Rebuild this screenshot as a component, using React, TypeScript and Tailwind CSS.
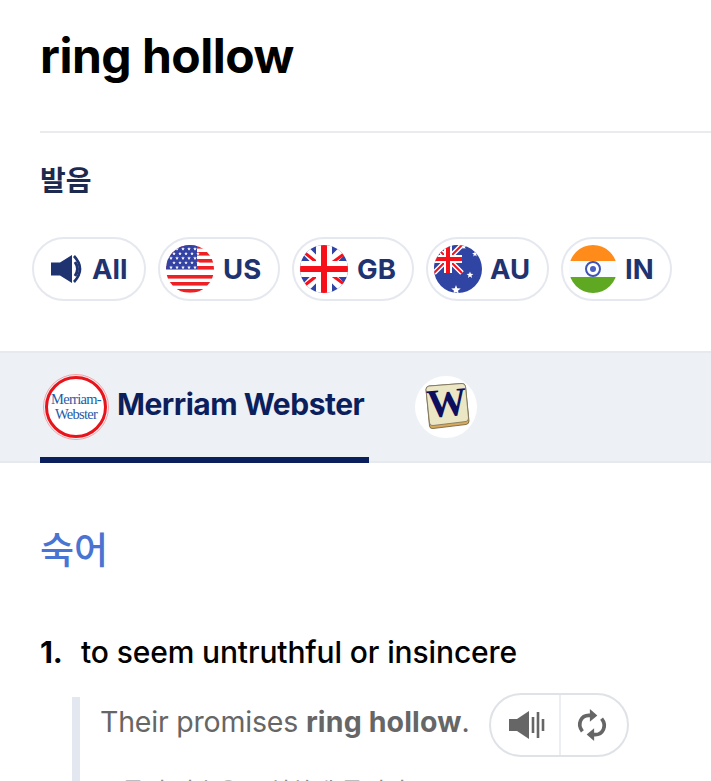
import React from 'react';

const Star: React.FC<{ x: number; y: number; r: number }> = ({ x, y, r }) => {
  const pts: string[] = [];
  for (let i = 0; i < 10; i++) {
    const a = -Math.PI / 2 + (i * Math.PI) / 5;
    const rad = i % 2 === 0 ? r : r * 0.42;
    pts.push(`${x + rad * Math.cos(a)},${y + rad * Math.sin(a)}`);
  }
  return <polygon points={pts.join(' ')} fill="#fff" />;
};

const Round: React.FC<{ id: string; children: React.ReactNode }> = ({ id, children }) => (
  <svg width="48" height="48" viewBox="0 0 48 48" className="shrink-0">
    <defs>
      <clipPath id={id}>
        <circle cx="24" cy="24" r="24" />
      </clipPath>
    </defs>
    <g clipPath={`url(#${id})`}>{children}</g>
  </svg>
);

const UsFlag = () => {
  const stars: [number, number][] = [];
  for (let row = 0; row < 5; row++) {
    for (let col = 0; col < 5; col++) {
      stars.push([5 + col * 6 + (row % 2 ? 3 : 0), 4 + row * 4.6]);
    }
  }
  return (
    <Round id="us">
      <rect width="48" height="48" fill="#fff" />
      {[0, 7, 14, 21, 30, 37, 44].map((y) => (
        <rect key={y} x="0" y={y} width="48" height="3.6" fill="#ee2024" />
      ))}
      <rect width="31" height="24" fill="#3342a3" />
      {stars.map(([x, y], i) => (
        <Star key={i} x={x} y={y} r={1.9} />
      ))}
    </Round>
  );
};

const GbFlag = () => (
  <Round id="gb">
    <rect width="48" height="48" fill="#3044a4" />
    <path d="M0 0L48 48M48 0L0 48" stroke="#fff" strokeWidth="9" />
    <path d="M0 4L20 20M48 6L29 20M0 44L19 29M48 42L29 28" stroke="#f5101a" strokeWidth="3" />
    <rect x="16" width="16" height="48" fill="#fff" />
    <rect y="16" width="48" height="16" fill="#fff" />
    <rect x="21" width="6" height="48" fill="#f5101a" />
    <rect y="21" width="48" height="6" fill="#f5101a" />
  </Round>
);

const AuFlag = () => (
  <Round id="au">
    <rect width="48" height="48" fill="#3044a4" />
    <g>
      <rect width="28" height="28" fill="#3044a4" />
      <path d="M0 0L28 28M28 0L0 28" stroke="#fff" strokeWidth="5" />
      <path d="M0 0L28 28M28 0L0 28" stroke="#f5101a" strokeWidth="2" />
      <rect x="10" width="8" height="28" fill="#fff" />
      <rect y="10" width="28" height="8" fill="#fff" />
      <rect x="12" width="4" height="28" fill="#f5101a" />
      <rect y="12" width="28" height="4" fill="#f5101a" />
    </g>
    <Star x={36} y={30} r={3.6} />
    <Star x={22} y={45} r={5} />
    <Star x={41} y={9} r={3} />
    <Star x={30} y={2} r={2.5} />
  </Round>
);

const InFlag = () => (
  <Round id="in">
    <rect width="48" height="16" fill="#ff8c1a" />
    <rect y="16" width="48" height="16" fill="#f8fcff" />
    <rect y="32" width="48" height="16" fill="#5fa822" />
    <circle cx="24" cy="24" r="7" fill="#fff" stroke="#3f53b5" strokeWidth="2" />
    <circle cx="24" cy="24" r="3" fill="#4a5fc0" />
  </Round>
);

const Pill: React.FC<{ label: string; flag: React.ReactNode; className: string }> = ({ label, flag, className }) => (
  <div className={`flex h-16 items-center rounded-full border-2 border-[#e5e8ee] bg-white ${className}`}>
    {flag}
    <span className="pt-0.5 text-[27.5px] font-bold text-[#1e3370]">{label}</span>
  </div>
);

const MwLogo = () => (
  <div className="relative flex size-[62px] shrink-0 flex-col items-center justify-center rounded-full border-[3px] border-[#e8141c] bg-white font-['Liberation_Serif',serif] text-[14.5px] leading-[15px] tracking-[-0.7px] text-[#1d5ca8] outline outline-1 outline-offset-1 outline-[#f2a5a8]">
    <span>Merriam-</span>
    <span>Webster</span>
  </div>
);

const WikiLogo = () => (
  <div className="flex size-[62px] items-center justify-center rounded-full bg-white">
    <svg width="48" height="48" viewBox="0 0 48 48">
      <path d="M4 6.5Q4 3.5 7 3L40 0.5Q43 0.5 43.5 3.5L47 38Q47 41 44 41.5L11 45.5Q8 46 7.5 43Z" fill="#d8a95c" stroke="#6b5a35" strokeWidth="0.8" />
      <path d="M4 6.5Q4 3.5 7 3L40 0.5Q43 0.5 43.5 3.5L46.5 35Q46.5 38 44 38.5L11 42.5Q8 43 7.5 40Z" fill="#ebe6c4" stroke="#77705a" strokeWidth="0.8" />
      <text x="25" y="33" textAnchor="middle" transform="rotate(-5 25 22)" fontFamily="Liberation Serif, serif" fontWeight="700" fontSize="40" fill="#0d0f5e">
        W
      </text>
    </svg>
  </div>
);

const App: React.FC = () => {
  return (
    <div className="h-[781px] w-[711px] overflow-hidden bg-white font-['Inter','Noto_Sans_CJK_KR',sans-serif]">
      <div className="pl-10">
        <h1 className="pt-[26px] pb-[46px] text-[48px] leading-[59px] font-bold tracking-[-0.5px] text-black">ring hollow</h1>
        <div className="h-0.5 bg-[#e9ebee]" />
        <h2 className="mt-[30px] text-[28px] leading-9 font-bold text-[#1b2a4e]">발음</h2>
      </div>

      <div className="mt-[38px] flex gap-3 pl-8">
        <div className="flex h-16 w-[114px] items-center rounded-full border-2 border-[#e5e8ee] bg-white pl-[16px]">
          <svg width="36" height="30" viewBox="0 0 36 30" className="shrink-0">
            <path d="M1 8.5H10L22 1V29L10 21.5H1Z" fill="#1e3370" />
            <path d="M25 8Q30 15 25 22" fill="none" stroke="#1e3370" strokeWidth="3" />
            <path d="M24 2Q36 15 24 28" fill="none" stroke="#1e3370" strokeWidth="2.6" />
          </svg>
          <span className="ml-[6px] pt-0.5 text-[27.5px] font-bold text-[#1e3370]">All</span>
        </div>
        <Pill label="US" flag={<UsFlag />} className="w-[122px] gap-[9px] pl-1.5" />
        <Pill label="GB" flag={<GbFlag />} className="w-[122px] gap-[9px] pl-1.5" />
        <Pill label="AU" flag={<AuFlag />} className="w-[123px] gap-2 pl-1.5" />
        <Pill label="IN" flag={<InFlag />} className="w-[111px] gap-2 pl-1.5" />
      </div>

      <div className="mt-[50px] flex h-[112px] border-y-2 border-[#e6e9ed] bg-[#edf0f4] pl-10">
        <div className="flex h-[110px] w-[329px] items-center gap-[10px] border-b-[6px] border-[#0b1f5c] pt-1 pl-[5px]">
          <MwLogo />
          <span className="mb-[6px] text-[30px] font-bold tracking-[-0.5px] whitespace-nowrap text-[#0b1f5c]">Merriam Webster</span>
        </div>
        <div className="ml-[46px] flex h-[108px] items-center">
          <WikiLogo />
        </div>
      </div>

      <div className="pl-10">
        <h3 className="mt-[63px] text-[37px] leading-[50px] font-medium text-[#4a74d2]">숙어</h3>
        <div className="mt-[56px] flex text-[30px] leading-10 tracking-[-0.13px] font-medium text-black">
          <span className="w-[41px] font-bold">1.</span>
          <span>to seem untruthful or insincere</span>
        </div>
        <div className="mt-[25px] ml-8 flex h-[120px] flex-col border-l-8 border-[#e3e7f0] pl-[20px]">
          <div className="flex items-start">
            <p className="pt-[5px] text-[28.5px] leading-10 tracking-[-0.2px] text-[#666]">
              Their promises <b className="font-bold tracking-[0.15px]">ring hollow</b>.
            </p>
            <div className="mt-[-4px] ml-[19px] flex h-16 w-[140px] rounded-full border-2 border-[#dfe2e7] bg-white">
              <div className="flex w-[70px] items-center justify-center border-r-2 border-[#eceef1] pl-1">
                <svg width="36" height="30" viewBox="0 0 36 30">
                  <path d="M0 9H8L20 1V29L8 21H0Z" fill="#666" />
                  <path d="M24 7V23M29 2V28M34 9V21" stroke="#666" strokeWidth="2.6" fill="none" />
                </svg>
              </div>
              <div className="flex flex-1 items-center justify-center pr-1">
                <svg width="32" height="32" viewBox="0 0 30 30" fill="none" stroke="#666" strokeWidth="3.4">
                  <path d="M6 21C0.5 14 5 6 12 6H17" />
                  <path d="M13 0L20 6L13 12" fill="#666" stroke="none" />
                  <path d="M24 9C29.5 16 25 24 18 24H13" />
                  <path d="M17 18L10 24L17 30" fill="#666" stroke="none" />
                </svg>
              </div>
            </div>
          </div>
          <p className="mt-[17px] text-[24px] leading-9 whitespace-nowrap text-[#888]">그들의 약속은 공허하게 들린다.</p>
        </div>
      </div>
    </div>
  );
};

export default App;
